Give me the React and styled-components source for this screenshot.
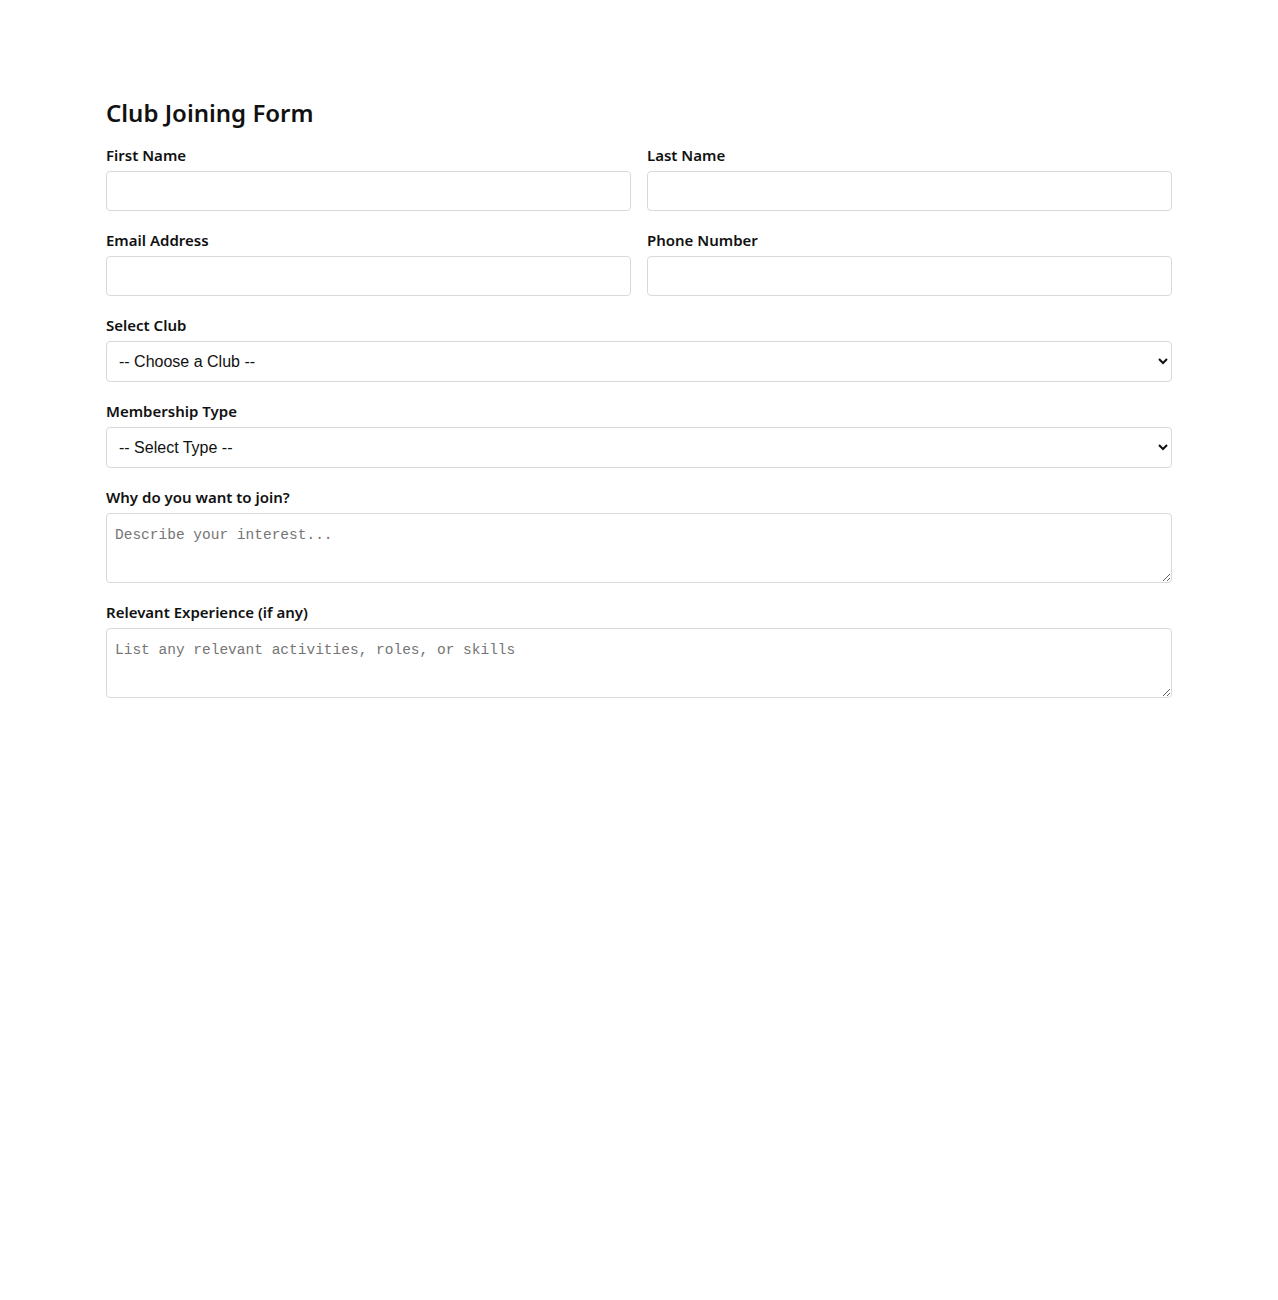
import React from 'react';
import styled, {createGlobalStyle} from 'styled-components';

const GlobalStyle = createGlobalStyle`
  body {
    margin: 0;
    background: #fff;
    color: #111;
    font-family: "Noto Sans", "Open Sans", sans-serif;
  }
`;

const Page = styled.div`
  width: 1066px;
  margin: 0 auto;
  padding-top: 98px;
`;

const Title = styled.h2`
  margin: 0 0 17px;
  font-size: 24px;
  line-height: 30px;
  font-weight: 600;
  color: #111;
`;

const Form = styled.form`
  display: flex;
  flex-direction: column;
  gap: 19px;
`;

const Row = styled.div`
  display: grid;
  grid-template-columns: 1fr 1fr;
  gap: 16px;
`;

const Field = styled.div`
  display: flex;
  flex-direction: column;
`;

const Label = styled.label`
  font-size: 15px;
  line-height: 20px;
  font-weight: 600;
  margin-bottom: 6px;
  color: #111;
`;

const Input = styled.input`
  box-sizing: border-box;
  height: 40px;
  padding: 0 12px;
  border: 1px solid #d9d9d9;
  border-radius: 4px;
  font-size: 15px;
  font-family: "Noto Sans", sans-serif;
  outline: none;
`;

const Select = styled.select`
  box-sizing: border-box;
  height: 41px;
  padding: 0 8px;
  border: 1px solid #d9d9d9;
  border-radius: 4px;
  background: #fff;
  color: #111;
  font-size: 16px;
  font-family: "Liberation Sans", Arial, sans-serif;
  outline: none;
`;

const TextArea = styled.textarea`
  box-sizing: border-box;
  height: 70px;
  padding: 13px 8px 8px;
  border: 1px solid #d9d9d9;
  border-radius: 4px;
  font-size: 14.5px;
  font-family: "Liberation Mono", "DejaVu Sans Mono", monospace;
  resize: vertical;
  outline: none;

  &::placeholder {
    color: #757575;
  }
`;

export default function App() {
  return (
    <>
      <GlobalStyle />
      <Page>
        <Title>Club Joining Form</Title>
        <Form>
          <Row>
            <Field>
              <Label htmlFor="firstName">First Name</Label>
              <Input id="firstName" type="text" />
            </Field>
            <Field>
              <Label htmlFor="lastName">Last Name</Label>
              <Input id="lastName" type="text" />
            </Field>
          </Row>
          <Row>
            <Field>
              <Label htmlFor="email">Email Address</Label>
              <Input id="email" type="email" />
            </Field>
            <Field>
              <Label htmlFor="phone">Phone Number</Label>
              <Input id="phone" type="tel" />
            </Field>
          </Row>
          <Field>
            <Label htmlFor="club">Select Club</Label>
            <Select id="club" defaultValue="">
              <option value="">-- Choose a Club --</option>
            </Select>
          </Field>
          <Field>
            <Label htmlFor="membership">Membership Type</Label>
            <Select id="membership" defaultValue="">
              <option value="">-- Select Type --</option>
            </Select>
          </Field>
          <Field>
            <Label htmlFor="reason">Why do you want to join?</Label>
            <TextArea id="reason" placeholder="Describe your interest..." />
          </Field>
          <Field>
            <Label htmlFor="experience">Relevant Experience (if any)</Label>
            <TextArea
              id="experience"
              placeholder="List any relevant activities, roles, or skills"
            />
          </Field>
        </Form>
      </Page>
    </>
  );
}
